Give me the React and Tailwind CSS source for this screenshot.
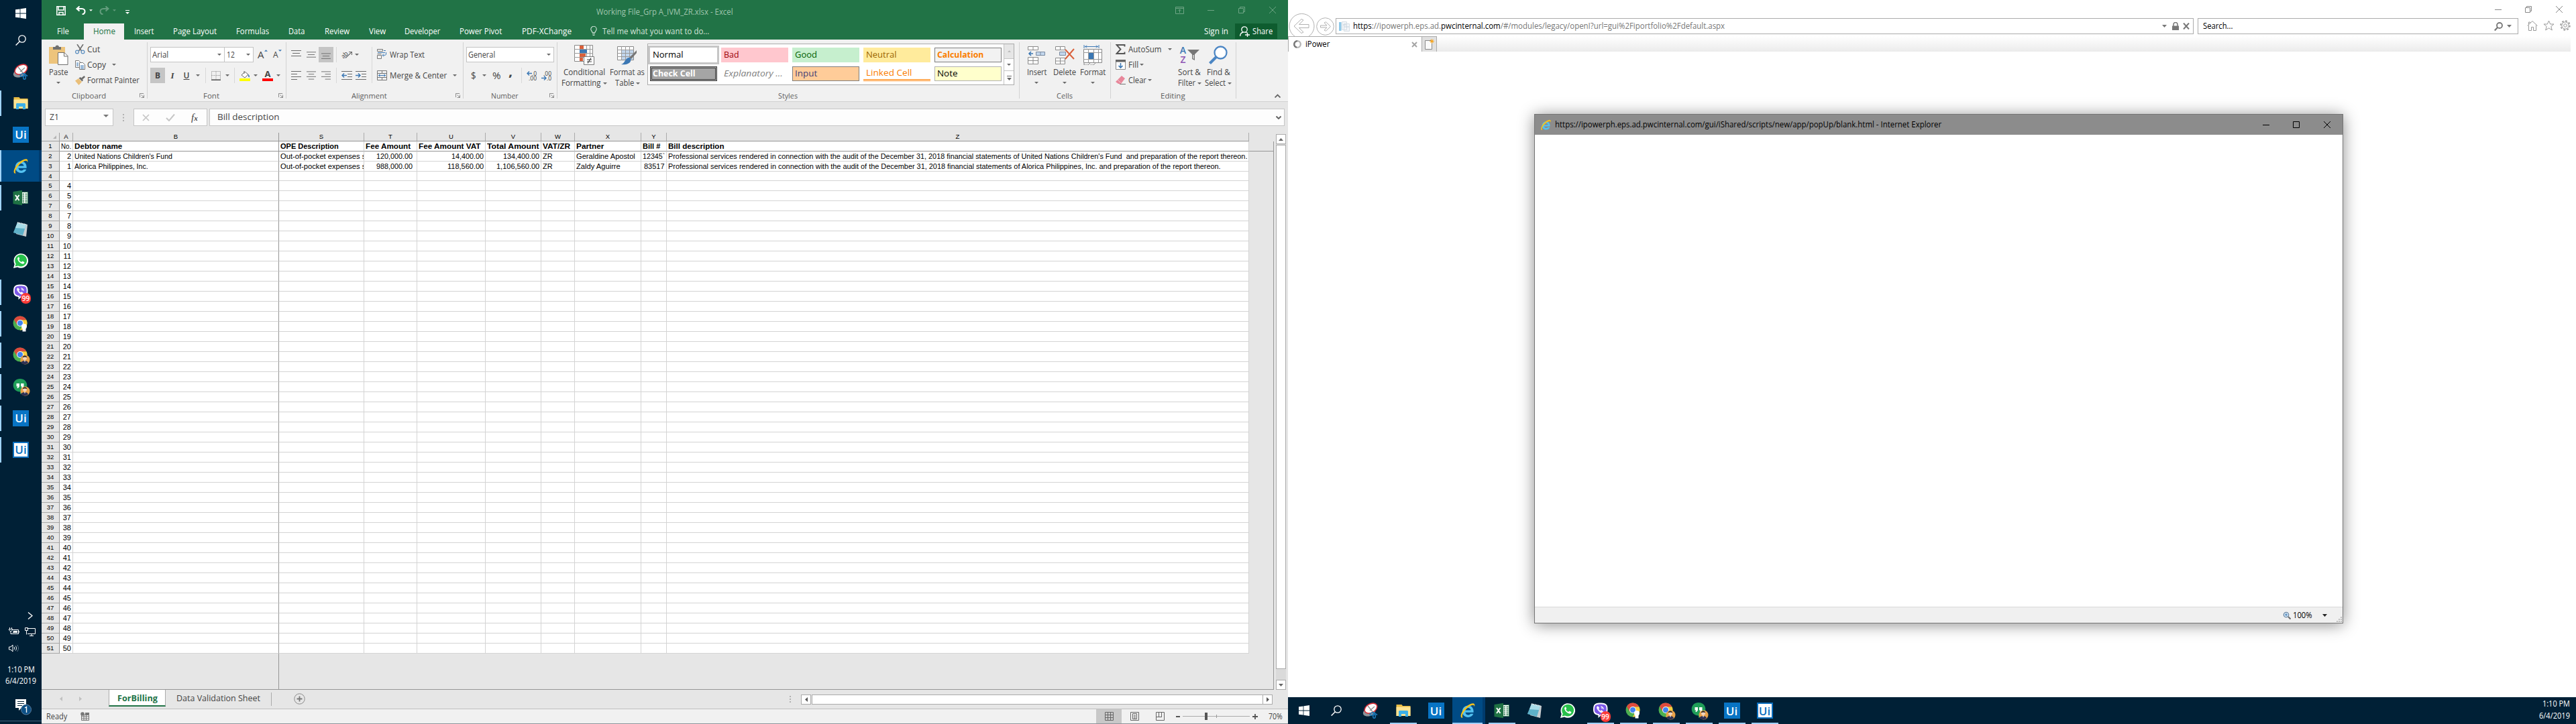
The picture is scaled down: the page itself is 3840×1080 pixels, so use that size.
import { useLayoutEffect, useRef } from "react";

/* Single-line label squeezed or stretched to the width of its box. */
function Fit({ className = "", children }) {
  const box = useRef(null);
  const inner = useRef(null);
  useLayoutEffect(() => {
    const run = () => {
      const natural = inner.current.offsetWidth;
      if (natural) inner.current.style.transform = `scaleX(${box.current.clientWidth / natural})`;
    };
    run();
    document.fonts?.ready.then(run);
  }, []);
  return (
    <span ref={box} className={`block shrink-0 whitespace-pre ${className}`}>
      <span ref={inner} className="inline-block origin-left whitespace-pre">{children}</span>
    </span>
  );
}

const Svg = ({ className, box, children }) => (
  <svg className={`block shrink-0 ${className}`} viewBox={box} fill="none">{children}</svg>
);

const Caret = ({ className = "" }) => (
  <Svg className={`h-[3px] w-[6px] ${className}`} box="0 0 6 3"><path d="M0 0h6L3 3z" fill="#6a6a6a" /></Svg>
);

/* ---------- Taskbar icons ---------- */
const WinIcon = () => (
  <Svg className="size-4" box="0 0 16 16"><path d="M0 2.3 6.6 1.4v6.1H0zM7.4 1.3 16 0v7.5H7.4zM0 8.4h6.6v6.2L0 13.7zM7.4 8.4H16V16l-8.6-1.3z" fill="#fff" /></Svg>
);
const SearchIcon = () => (
  <Svg className="size-4" box="0 0 16 16"><circle cx="10" cy="6" r="5.2" stroke="#fff" strokeWidth="1.3" /><path d="M6.4 9.8.6 15.6" stroke="#fff" strokeWidth="1.4" /></Svg>
);
const SnipIcon = () => (
  <Svg className="size-6" box="0 0 24 24">
    <ellipse cx="10" cy="14" rx="9.5" ry="6" transform="rotate(-20 10 14)" fill="#8d949b" />
    <ellipse cx="12.5" cy="8.6" rx="10" ry="6.6" transform="rotate(-28 12.5 8.6)" fill="#fff" stroke="#d8303a" strokeWidth="1.6" />
    <path d="M8 5l9 11M18 6l-7 6" stroke="#8b8b8b" strokeWidth="1.2" />
    <ellipse cx="14" cy="17" rx="3" ry="1.8" transform="rotate(-25 14 17)" stroke="#1d79b8" strokeWidth="1.6" />
    <ellipse cx="17.5" cy="20.5" rx="1.8" ry="2.8" stroke="#1d79b8" strokeWidth="1.6" /><path d="M16 14.5l6 4" stroke="#1d79b8" strokeWidth="1.8" />
  </Svg>
);
const FolderIcon = () => (
  <Svg className="size-6" box="0 0 24 24">
    <path d="M1.5 3h8l1.5 2h11.5v15h-21z" fill="#e9bd45" /><path d="M1.5 6.5h21V20h-21z" fill="#fde393" />
    <path d="M5 21v-7.5c0-1 .7-1.5 1.5-1.5h11c.8 0 1.5.5 1.5 1.5V21h-4v-4H9v4z" fill="#3db0e8" />
  </Svg>
);
const UiIcon = ({ inverse }) => (
  <span className={inverse
    ? "flex size-6 items-center justify-center border-2 border-[#0a6fbf] bg-white text-[#0a6fbf]"
    : "flex size-6 items-center justify-center bg-[#0874c4] text-white"}>
    <span className="font-['Open_Sans',sans-serif] text-[17px] leading-none font-semibold">Ui</span>
  </span>
);
const IeIcon = ({ className = "size-6" }) => (
  <Svg className={className} box="0 0 24 24">
    <path d="M20.6 14.8H8.4c.3 2.4 2 3.7 4.2 3.7 1.600 0 2.800-.6 3.600-1.800h4.100c-1.200 3.300-4.200 5.200-7.800 5.200-5 0-8.700-3.500-8.700-8.600 0-5 3.700-8.700 8.600-8.700 5.400 0 8.600 4 8.200 10.200zM16.500 11.600c-.3-2.100-1.800-3.500-4-3.500-2.100 0-3.700 1.400-4.100 3.500z" fill="#53c1f0" />
    <path d="M4.500 22.500C1 23.500.5 19 4 13 8 6 16 .5 20.500 1.300c2 .4 2.200 2.700 1.300 5.300.1-2-.6-3-2.300-2.800C14 4.300 5.500 13 4 18.500c-.5 2 0 3.300.5 4z" fill="#f6c21c" />
  </Svg>
);
const ExcelIcon = () => (
  <Svg className="size-6" box="0 0 24 24">
    <path d="M12 3.500h10.500v17H12z" fill="#fff" stroke="#1f7244" strokeWidth=".8" />
    <path d="M14.500 6.500h2.500M18.500 6.500h3M14.500 9.500h2.500M18.500 9.500h3M14.500 12.500h2.500M18.500 12.500h3M14.500 15.500h2.500M18.500 15.500h3M14.500 18.300h2.500M18.500 18.300h3" stroke="#1f7244" strokeWidth="1.500" />
    <path d="M.5 3 14 .8v22.400L.5 21z" fill="#1f7244" /><path d="M4 8l5.500 8M9.500 8 4 16" stroke="#fff" strokeWidth="2" />
  </Svg>
);
const NoteIcon = () => (
  <Svg className="size-6" box="0 0 24 24">
    <path d="M8 2 22 5l-2 18L5 19z" fill="#c9cdd0" /><path d="M7 2 20 5l-5 16L.8 17z" fill="#5fb1c9" />
    <path d="M7 2l13 3-2 6L3.800 10z" fill="#a7dbe8" /><path d="M7 2l13 3" stroke="#e8e8e8" strokeWidth="1.800" strokeDasharray="1.500 1" />
  </Svg>
);
const WhatsIcon = () => (
  <Svg className="size-6" box="0 0 24 24">
    <path d="M1 23l1.700-6A10.800 10.800 0 1 1 7 21.400z" fill="#fff" /><path d="M3.500 20.500l1.200-4A8.900 8.900 0 1 1 8 19.500z" fill="#27c04a" />
    <path d="M8.500 6.500c-1.200.7-1.700 2-1.200 3.500 1 3 3.600 5.700 6.800 6.600 1.500.4 2.800-.2 3.200-1.600.2-.7 0-.9-.5-1.200l-2-1c-.4-.2-.7-.1-1 .3l-.8.9c-1.800-.8-3-2-3.800-3.700l.7-.9c.3-.4.300-.6.100-1L9.300 6.700c-.2-.4-.5-.4-.8-.2z" fill="#fff" />
  </Svg>
);
const ViberIcon = () => (
  <span className="relative block size-6">
    <Svg className="size-6" box="0 0 24 24">
      <path d="M5 1.500C8 .3 15 .3 18.500 1.500c3 1.100 4.200 4 4 8.500 0 6-2 8.500-7 9l-3 .200L8.500 23v-4C3 18 1 15.500 1 10c0-4.500 1-7.400 4-8.500z" fill="#fff" />
      <path d="M6 3.200c3-1 8.500-1 11.700 0 2.300.8 3.200 3 3 6.800 0 4.800-1.500 6.900-5.700 7.300l-3 .2-2 2v-2.300c-5.500-.7-7.200-2.500-7.200-7.200 0-3.800.9-6 3.200-6.800z" fill="#7b58e8" />
      <path d="M7.500 5.500c-1.500 1-1.300 2.500-.5 4 1.200 2.500 3.300 4.600 6 5.600 1.500.5 2.500-.8 2.800-1.600-.8-1-2-1.800-2.700-2l-1.200 1c-1.500-.6-2.500-1.700-3-3l1-1.200c-.4-1.200-1.400-2.700-2.400-2.800zM12 5.500c3 .2 4.500 2 4.600 4.800M12.400 7.600c1.300.2 2 1 2 2.200" fill="#fff" stroke="#fff" strokeWidth=".5" />
    </Svg>
    <span className="absolute -right-[3px] bottom-[-5px] flex h-4 w-[15px] items-center justify-center rounded-[7px] bg-[#fb3b37] font-['Open_Sans',sans-serif] text-[10px] leading-none font-semibold text-white">99</span>
  </span>
);
const Avatar = () => (
  <g><circle cx="18.500" cy="18.500" r="7" fill="#e9a24a" /><circle cx="18" cy="16" r="3" fill="#f1d3bd" /><path d="M14.800 15.500c0-4 6.400-4 6.400 0-1.500-1.500-4.500-1.500-6.400 0z" fill="#2a2523" /><path d="M12.500 22.500c1.500-3.500 9.500-3.500 10.500.700-3 3-8 3-10.500-.7z" fill="#2d2f52" /><path d="M17 19.500h2l-1 3z" fill="#fff" /></g>
);
const ChromeIcon = ({ avatar }) => (
  <Svg className="size-7" box="-2 -2 28 28">
    <circle cx="11" cy="11" r="10.500" fill="#4caf50" />
    <path d="M1.900 5.700A10.500 10.500 0 0 1 20.500 6.500H11z" fill="#df4a3d" /><path d="M1.900 5.700 6.500 13.500 11 6.500z" fill="#df4a3d" />
    <path d="M20.500 6.500H11l4.500 7.500-4.800 7.500A10.500 10.500 0 0 0 20.500 6.500z" fill="#f9cf3e" />
    <circle cx="11" cy="11" r="5" fill="#fff" /><circle cx="11" cy="11" r="4" fill="#4284f0" />
    {avatar ? <Avatar /> : <path d="M13 15c0-4 8-4 8 0 0 2-.5 3.500-1.500 4.500v4h-5v-4C13.500 18.500 13 17 13 15z" fill="#fff" />}
  </Svg>
);
const HangIcon = () => (
  <Svg className="size-7" box="-2 -2 28 28">
    <path d="M11 0C5 0 .7 4.200.7 9.800c0 5.400 4.300 9.700 10.300 9.700V23c6-3 10.300-8 10.300-13.200C21.300 4.200 17 0 11 0z" fill="#1f9d58" />
    <path d="M5.500 7h4.500v4.500L8 14H6.300l1-2.500H5.500zM12 7h4.500v4.500l-2 2.500h-1.700l1-2.500H12z" fill="#fff" /><Avatar />
  </Svg>
);

const APPS = [
  { icon: SnipIcon }, { icon: FolderIcon, open: true }, { icon: UiIcon }, { icon: IeIcon, active: true },
  { icon: ExcelIcon, open: true }, { icon: NoteIcon }, { icon: WhatsIcon }, { icon: ViberIcon, open: true },
  { icon: ChromeIcon, open: true }, { icon: ChromeIcon, open: true, props: { avatar: true } }, { icon: HangIcon, open: true },
  { icon: UiIcon, open: true }, { icon: UiIcon, open: true, props: { inverse: true } },
];

function SideTaskbar() {
  return (
    <aside className="flex h-[1080px] w-[62px] shrink-0 flex-col bg-[#002036] text-white">
      <div className="flex h-10 items-center justify-center"><WinIcon /></div>
      <div className="flex h-[43px] items-center justify-center pb-[3px]"><SearchIcon /></div>
      {APPS.map(({ icon: Icon, open, active, props }, i) => (
        <div key={i} className={`flex h-[47px] items-center ${active ? "border-r-4 border-[#003c6e] bg-[#004b85]" : ""}`}>
          <div className={`w-[2px] ${active ? "h-full bg-[#9fd3fb]" : open ? "h-[38px] bg-[#9fd3fb]" : "h-0"}`} />
          <div className={`flex flex-1 justify-center ${active ? "pl-[2px]" : "pr-[2px]"}`}><Icon {...props} /></div>
        </div>
      ))}
      <div className="mt-auto flex h-[171px] flex-col">
        <Svg className="mt-1 ml-[41px] h-[11px] w-[8px]" box="0 0 8 11"><path d="M1 .5l6 5-6 5" stroke="#fff" strokeWidth="1.300" /></Svg>
        <div className="mt-[12px] flex">
          <Svg className="ml-[13px] h-[12px] w-[16px]" box="0 0 16 12"><path d="M6 3.500h8.500v6H5M15.500 5.500v2" stroke="#fff" /><path d="M7 5h6v3H6z" fill="#fff" /><path d="M1.500 0v2M4.500 0v2M.5 2.500h5v1.500L3 6 .5 4zM3 6v3.500h2" stroke="#fff" /></Svg>
          <Svg className="ml-2 h-[13px] w-[16px]" box="0 0 16 13"><path d="M3.500 1.500h12v8H4M7 12.500h6M10 10v2M.5.500h4v4h-4zM2.500 4.500v6" stroke="#fff" /></Svg>
        </div>
        <Svg className="mt-[12px] ml-[13px] h-[12px] w-[16px]" box="0 0 16 12"><path d="M.5 4h2.500L6 1v10L3 8H.5zM8 4c1 1 1 3 0 4M10 2.500c2 2 2 5 0 7" stroke="#fff" /><path d="M12.500 1c2.600 3 2.600 7 0 10" stroke="#60788a" /></Svg>
        <div className="mt-[17px] flex flex-col items-center text-[12px] leading-[17px]">
          <Fit className="w-[41px]">1:10 PM</Fit>
          <Fit className="w-[46px]">6/4/2019</Fit>
        </div>
        <div className="mt-[19px] ml-[23px] flex">
          <Svg className="h-[24px] w-[24px]" box="0 0 24 24"><path d="M0 0h16v13H9l-4 4v-4H0z" fill="#fff" /><path d="M3 3.500h10M3 6.500h10M3 9.500h7" stroke="#002036" /><circle cx="16" cy="15.500" r="7.500" fill="#0c4f85" stroke="#5b7f9e" /><path d="M14 13l2.500-1.500V20" stroke="#fff" strokeWidth="1.400" /></Svg>
        </div>
        <div className="mt-auto mb-1 h-px bg-[#43657c]" />
      </div>
    </aside>
  );
}

function BottomTaskbar() {
  return (
    <footer className="mt-auto flex h-10 shrink-0 bg-[#002036] text-white">
      <div className="flex w-12 items-center justify-center"><WinIcon /></div>
      <div className="mr-[2px] flex w-12 items-center justify-center"><SearchIcon /></div>
      {APPS.map(({ icon: Icon, open, active, props }, i) => (
        <div key={i} className={`flex h-10 w-[49px] flex-col items-center ${active ? "border-r-4 border-[#003c6e] bg-[#004b85]" : ""}`}>
          <div className="flex h-[38px] items-center pt-[2px]"><Icon {...props} /></div>
          <div className={`h-[2px] bg-[#9fcffb] ${active ? "w-full" : open ? "w-10" : "w-0"}`} />
        </div>
      ))}
      <div className="mr-[9px] ml-auto flex flex-col items-end pt-px text-[12px] leading-[18px]">
        <Fit className="w-[41px]">1:10 PM</Fit>
        <Fit className="w-[46px]">6/4/2019</Fit>
      </div>
    </footer>
  );
}

/* ---------- Excel ---------- */
const TABS = [
  ["File", "w-[63px]", "w-[18px]"], ["Home", "w-[60px] bg-[#f1f1f1] text-[#217346]", "w-[33px]"], ["Insert", "w-[58px]", "w-[29px]"],
  ["Page Layout", "w-[95px]", "w-[65px]"], ["Formulas", "w-[77px]", "w-[49px]"], ["Data", "w-[53px]", "w-[24px]"],
  ["Review", "w-[68px]", "w-[37px]"], ["View", "w-[52px]", "w-[25px]"], ["Developer", "w-[82px]", "w-[53px]"],
  ["Power Pivot", "w-[93px]", "w-[63px]"], ["PDF-XChange", "w-[103px]", "w-[74px]"],
];

function ExcelTitle() {
  return (
    <header className="h-[59px] bg-[#217346] text-white">
      <div className="flex h-[35px] items-center">
        <Svg className="mb-1 ml-[22px] size-[14px]" box="0 0 14 14"><path d="M.8.8h12.400v12.400H.8zM3 1v5h8V1M4 13V9.500h6V13" stroke="#fff" strokeWidth="1.500" /></Svg>
        <Svg className="mb-[5px] ml-[15px] h-[13px] w-[15px]" box="0 0 15 13"><path d="M5.500.5 1.500 4l4 3.500M2 4h7c3 0 4.500 2 4.500 4s-1.500 4-4 4.500" stroke="#fff" strokeWidth="2" /></Svg>
        <Svg className="mb-[5px] ml-[5px] h-[3px] w-[5px]" box="0 0 6 3"><path d="M0 0h6L3 3z" fill="#fff" /></Svg>
        <Svg className="mb-[5px] ml-[10px] h-[13px] w-[15px] opacity-30" box="0 0 15 13"><path d="M9.500.5l4 3.500-4 3.500M13 4H6C3 4 1.500 6 1.500 8s1.500 4 4 4.500" stroke="#fff" strokeWidth="2" /></Svg>
        <Svg className="mb-[5px] ml-[5px] h-[3px] w-[5px] opacity-30" box="0 0 6 3"><path d="M0 0h6L3 3z" fill="#fff" /></Svg>
        <Svg className="ml-[14px] h-[6px] w-[6px]" box="0 0 6 6"><path d="M0 .5h6" stroke="#fff" /><path d="M0 3h6L3 6z" fill="#fff" /></Svg>
        <Fit className="ml-[696px] w-[204px] text-[12px] text-[#a0c5ae]">Working File_Grp A_IVM_ZR.xlsx - Excel</Fit>
        <div className="mb-[5px] ml-auto flex items-center pr-[18px] opacity-60">
          <Svg className="h-[11px] w-[13px]" box="0 0 13 11"><path d="M.5.5h12v10H.5zM.5 2.500h12M6.500 9V4M4.500 6l2-2 2 2" stroke="#a0c5ae" /></Svg>
          <Svg className="ml-[35px] h-[11px] w-[10px]" box="0 0 10 11"><path d="M0 5.500h10" stroke="#a0c5ae" /></Svg>
          <Svg className="ml-[36px] size-[10px]" box="0 0 10 10"><path d="M.5 2.500h7v7h-7zM2.500 2.500v-2h7v7h-2" stroke="#a0c5ae" /></Svg>
          <Svg className="ml-[36px] size-[10px]" box="0 0 10 10"><path d="M0 0l10 10M10 0 0 10" stroke="#a0c5ae" /></Svg>
        </div>
      </div>
      <nav className="flex h-6 items-center text-[12px]">
        {TABS.map(([name, box, text]) => (
          <div key={name} className={`flex h-6 items-center justify-center ${box}`}><Fit className={text}>{name}</Fit></div>
        ))}
        <Svg className="mb-[2px] ml-[14px] h-[14px] w-[10px]" box="0 0 10 14"><path d="M3 9.500C3 7.500.8 7 .8 4.500a4.200 4.200 0 0 1 8.400 0C9.200 7 7 7.500 7 9.500zM3 11.500h4M3.500 13.500h3" stroke="#d6e6dc" strokeWidth="1.100" /></Svg>
        <Fit className="ml-[8px] w-[159px] text-[#d3e3d9]">Tell me what you want to do...</Fit>
        <Fit className="ml-auto w-[36px]">Sign in</Fit>
        <div className="mr-4 mb-px ml-[10px] flex h-[23px] w-[63px] items-center bg-[#0e5c2f] pl-[7px]">
          <Svg className="h-[16px] w-[15px]" box="0 0 15 16"><circle cx="7" cy="5" r="4.200" stroke="#fff" strokeWidth="1.300" /><path d="M.7 15c0-3.500 2-5.500 4.500-6M8.800 9l1.700 1.200M8 13h7M11.500 9.500v6.500" stroke="#fff" strokeWidth="1.300" /></Svg>
          <Fit className="ml-[4px] w-[30px]">Share</Fit>
        </div>
      </nav>
    </header>
  );
}

const Launcher = () => (
  <Svg className="mr-[4px] ml-auto h-[7px] w-[7px]" box="0 0 8 8"><path d="M.5 7V.5H7M3 3l4 4M7.500 3v4.500H3" stroke="#777" /></Svg>
);

function Group({ className, label, labelClass, launcher, children }) {
  return (
    <section className={`flex h-[84px] shrink-0 flex-col border-r border-[#d2d2d2] ${className}`}>
      <div className="flex h-[75px]">{children}</div>
      <div className="flex h-[9px] items-center">
        <Fit className={`text-[11.500px] text-[#5e5e5e] ${labelClass}`}>{label}</Fit>
        {launcher && <Launcher />}
      </div>
    </section>
  );
}

const Lines = ({ d, className = "w-[15px]" }) => (
  <Svg className={`h-[13px] ${className}`} box="0 0 15 13"><path d={d} stroke="#6a6a6a" /></Svg>
);
const Sep = ({ className }) => <div className={`h-[23px] w-px shrink-0 bg-[#d8d8d8] ${className}`} />;

const PasteIcon = () => (
  <Svg className="h-[30px] w-[29px]" box="0 0 29 30"><path d="M0 3h24v25H0z" fill="#edc47c" /><path d="M6 3h3.500C9.500-.5 15-.5 15 3h3v4H6z" fill="#707070" /><path d="M13.500 11.500H23l5 5v13H13.500z" fill="#fff" stroke="#6e6e6e" /><path d="M22.500 11.500V17H28" stroke="#6e6e6e" /></Svg>
);
const CutIcon = () => (
  <Svg className="h-[15px] w-[15px]" box="0 0 15 15"><path d="M3 0l6.500 10M12 0 5.500 10" stroke="#6e6e6e" strokeWidth="1.600" /><circle cx="3" cy="11.500" r="2.400" stroke="#5c8fc0" strokeWidth="1.200" /><circle cx="11.500" cy="11.500" r="2.400" stroke="#5c8fc0" strokeWidth="1.200" /></Svg>
);
const CopyIcon = () => (
  <Svg className="h-[14px] w-[15px]" box="0 0 15 14"><path d="M.5.500h5l2 2v8h-7z" fill="#fff" stroke="#777" /><path d="M6.500 3.500h5l3 3v7h-8z" fill="#fff" stroke="#777" /><path d="M2 4h3M2 6h3M2 8h3M8 8h5M8 10h5M8 12h5" stroke="#3c78b4" /></Svg>
);
const PainterIcon = () => (
  <Svg className="h-[14px] w-[15px]" box="0 0 15 14"><path d="M13.500 0l1.500 2-4 3.500-2-2z" fill="#6a6a6a" /><path d="M5.500 3.500 8 2l4 4.500-1.500 2z" fill="#6a6a6a" /><path d="M5 4l5 5-4.500 5L0 7.500z" fill="#eabf79" /></Svg>
);

function Small({ icon, text, width, caret }) {
  return (
    <div className="flex h-[23px] items-center">
      <div className="w-[15px]">{icon}</div>
      <Fit className={width}>{text}</Fit>
      {caret && <Caret className={caret} />}
    </div>
  );
}

function Big({ className, icon, a, aw, b, bw }) {
  return (
    <div className={`flex shrink-0 flex-col items-center pt-[4px] leading-4 ${className}`}>
      <div className="flex h-[30px] items-center">{icon}</div>
      <Fit className={`mt-[3px] h-4 ${aw}`}>{a}</Fit>
      <div className="flex h-4 items-center gap-[3px]">{b && <Fit className={bw}>{b}</Fit>}<Caret className={b ? "" : "mb-[2px]"} /></div>
    </div>
  );
}

const SWATCHES = [
  ["Normal", "bg-white text-black ring-[3px] ring-[#c6c6c6]", "w-[45px]"], ["Bad", "bg-[#ffc7ce] text-[#9c0006]", "w-[23px]"],
  ["Good", "bg-[#c6efce] text-[#006100]", "w-[33px]"], ["Neutral", "bg-[#ffeb9c] text-[#9c6500]", "w-[46px]"],
  ["Calculation", "border border-[#7f7f7f] bg-[#f2f2f2] font-bold text-[#fa7d00]", "w-[69px]"],
  ["Check Cell", "border-3 border-double border-[#3f3f3f] bg-[#a5a5a5] font-bold text-white", "w-[64px]"],
  ["Explanatory ...", "text-[#7f7f7f] italic", "w-[88px]"], ["Input", "border border-[#7f7f7f] bg-[#ffcc99] text-[#3f3f76]", "w-[33px]"],
  ["Linked Cell", "border-b-3 border-double border-[#ff8001] text-[#fa7d00]", "w-[69px]"],
  ["Note", "border border-[#b2b2b2] bg-[#ffffcc] text-black", "w-[31px]"],
];

const FmtLetter = ({ children, className, bar }) => (
  <span className={`flex flex-col items-center leading-none ${className}`}>{children}<span className={`h-1 w-4 ${bar}`} /></span>
);

function Ribbon() {
  return (
    <div className="flex h-[93px] border-b border-[#d2d2d2] bg-[#f1f1f1] pt-1 text-[12px] text-[#444]">
      <Group className="w-[158px]" label="Clipboard" labelClass="ml-[45px] w-[51px]" launcher>
        <Big className="ml-[9px] w-[32px]" icon={<PasteIcon />} a="Paste" aw="w-[29px]" />
        <div className="-mt-[1px] ml-[9px] flex flex-col">
          <Small icon={<CutIcon />} text="Cut" width="ml-[3px] w-[19px]" />
          <Small icon={<CopyIcon />} text="Copy" width="ml-[3px] w-[28px]" caret="ml-[9px]" />
          <Small icon={<PainterIcon />} text="Format Painter" width="ml-[3px] w-[78px]" />
        </div>
      </Group>
      <Group className="w-[207px]" label="Font" labelClass="ml-[83px] w-[24px]" launcher>
        <div className="flex flex-col pt-[7px]">
          <div className="flex h-[23px] items-center pl-[4px]">
            <div className="flex h-[23px] w-[111px] items-center border border-[#c4c4c4] bg-white pr-[4px] pl-[2px]"><Fit className="w-[24px]">Arial</Fit><Caret className="ml-auto" /></div>
            <div className="-ml-px flex h-[23px] w-[44px] items-center border border-[#c4c4c4] bg-white pr-[4px] pl-[3px]"><Fit className="w-[12px]">12</Fit><Caret className="ml-auto" /></div>
            <Fit className="ml-[6px] w-[10px] text-[15px]">A</Fit><Svg className="mb-3 h-[3px] w-[5px]" box="0 0 6 3"><path d="M0 3h6L3 0z" fill="#3c78b4" /></Svg>
            <Fit className="ml-[8px] w-[8px] pt-px text-[12px]">A</Fit><Svg className="mb-3 h-[3px] w-[5px]" box="0 0 6 3"><path d="M0 0h6L3 3z" fill="#3c78b4" /></Svg>
          </div>
          <div className="mt-[8px] flex h-[23px] items-center pl-[4px]">
            <div className="flex h-[23px] w-[22px] items-center justify-center bg-[#c5c5c5] font-bold">B</div>
            <div className="w-[22px] text-center font-['Liberation_Serif',serif] text-[13px] font-bold italic">I</div>
            <div className="w-[20px] text-center font-semibold underline">U</div>
            <Caret className="ml-[4px]" /><Sep className="ml-[8px]" />
            <Svg className="ml-[8px] size-[14px]" box="0 0 14 14"><path d="M.5.500h13v12H.5zM7 0v13M0 6.500h14" stroke="#8a8a8a" strokeDasharray="1 1" /><path d="M0 13.300h14" stroke="#555" strokeWidth="1.400" /></Svg>
            <Caret className="ml-[7px]" /><Sep className="ml-[7px]" />
            <Svg className="ml-[7px] h-[16px] w-[16px]" box="0 0 16 16"><path d="M7 1v4M3 7l5-5 5 4-5 5z" fill="#fff" stroke="#666" /><path d="M13 6c2 1 2.500 3 1.500 4.500C13 9.500 12.500 8 13 6z" fill="#3c78b4" /><path d="M0 12h16v4H0z" fill="#ff0" /></Svg>
            <Caret className="ml-[5px]" />
            <FmtLetter className="ml-[7px] text-[13px] font-bold" bar="bg-[#f00]">A</FmtLetter>
            <Caret className="ml-[5px]" />
          </div>
        </div>
      </Group>
      <Group className="w-[264px]" label="Alignment" labelClass="ml-[97px] w-[53px]" launcher>
        <div className="w-[127px] pt-[7px]">
          <div className="flex h-[23px] items-center">
            <Lines className="mb-[9px] ml-[7px] w-[15px]" d="M0 4.500h15M2 8.500h11M0 12.500h15" />
            <Lines className="ml-[8px] w-[14px]" d="M0 2.500h15M2 6.500h11M0 10.500h15" />
            <div className="ml-[4px] flex h-[23px] w-[22px] items-center justify-center bg-[#c5c5c5] pt-[7px]"><Lines className="w-[14px]" d="M0 .5h15M2 4.500h11M0 8.500h15" /></div>
            <Sep className="ml-[4px]" />
            <span className="ml-[6px] flex items-center">
              <span className="w-[11px] -rotate-45 text-[9px] leading-none">ab</span>
              <Svg className="-ml-[5px] h-[11px] w-[11px]" box="0 0 11 11"><path d="M1 10.500l9-8.500M6 1.500h4.500V6" stroke="#6a6a6a" strokeWidth="1.200" /></Svg>
            </span>
            <Caret className="ml-[4px]" />
          </div>
          <div className="mt-[8px] flex h-[23px] items-center">
            <Lines className="ml-[7px] w-[15px]" d="M0 .5h15M0 4.500h9M0 8.500h15M0 12.500h9" />
            <Lines className="ml-[8px] w-[14px]" d="M0 .5h15M3 4.500h9M0 8.500h15M3 12.500h9" />
            <Lines className="ml-[8px] w-[14px]" d="M0 .5h15M6 4.500h9M0 8.500h15M6 12.500h9" />
            <Sep className="ml-[8px]" />
            <Svg className="ml-[7px] h-[13px] w-[16px]" box="0 0 16 13"><path d="M0 .5h16M9 4.500h7M9 8.500h7M0 12.500h16" stroke="#6a6a6a" /><path d="M1 6.500h7M4 3.500l-3 3 3 3" stroke="#3c78b4" strokeWidth="1.500" /></Svg>
            <Svg className="ml-[5px] h-[13px] w-[16px]" box="0 0 16 13"><path d="M0 .5h16M9 4.500h7M9 8.500h7M0 12.500h16" stroke="#6a6a6a" /><path d="M0 6.500h7M4 3.500l3 3-3 3" stroke="#3c78b4" strokeWidth="1.500" /></Svg>
          </div>
        </div>
        <div className="mt-[7px] h-[54px] w-px bg-[#d8d8d8]" />
        <div className="flex flex-col pt-[7px]">
          <div className="flex h-[23px] items-center">
            <Svg className="mb-[2px] ml-[7px] h-[15px] w-[15px]" box="0 0 15 15"><path d="M.5.500h8v3h-8zM.5 7.500h6M.5 9.500h6v5h-6z" stroke="#777" /><path d="M10 2.500h3M1 5.500h11M13.500 5v3c0 1-1 1.500-5 1.500M10 7.500l-2 2 2 2" stroke="#3c78b4" /></Svg>
            <Fit className="ml-[4px] w-[52px]">Wrap Text</Fit>
          </div>
          <div className="mt-[8px] flex h-[23px] items-center">
            <Svg className="ml-[7px] h-[15px] w-[15px]" box="0 0 15 15"><path d="M.5.500h14v14H.5zM.5 4.500h14M.5 10.500h14M7.500 0v4M7.500 11v4" stroke="#777" /><path d="M2 7.500h11M4.500 5.500l-2 2 2 2M10.500 5.500l2 2-2 2" stroke="#3c78b4" /></Svg>
            <Fit className="ml-[4px] w-[85px]">Merge &amp; Center</Fit>
            <Caret className="ml-[9px]" />
          </div>
        </div>
      </Group>
      <Group className="w-[140px]" label="Number" labelClass="ml-[41px] w-[41px]" launcher>
        <div className="flex flex-col pt-[7px]">
          <div className="ml-[4px] flex h-[23px] w-[131px] items-center border border-[#c4c4c4] bg-white pr-[4px] pl-[2px]"><Fit className="w-[40px]">General</Fit><Caret className="ml-auto" /></div>
          <div className="mt-[8px] flex h-[23px] items-center">
            <Fit className="ml-[11px] w-[8px] text-[15px]">$</Fit><Caret className="ml-[9px]" />
            <Fit className="ml-[9px] w-[13px] text-[14px]">%</Fit>
            <Fit className="mb-[10px] ml-[11px] w-[6px] text-[18px] font-bold">,</Fit>
            <Sep className="ml-[13px]" />
            <div className="ml-[7px] w-[15px] text-right text-[8.500px] leading-[7px]"><div className="flex items-center justify-end"><Svg className="h-[7px] w-[8px]" box="0 0 8 7"><path d="M1 3.500h7M4 .5l-3 3 3 3" stroke="#3c78b4" strokeWidth="1.400" /></Svg>.0</div><div>.00</div></div>
            <div className="ml-[7px] w-[15px] text-right text-[8.500px] leading-[7px]"><div>.00</div><div className="flex items-center justify-end"><Svg className="h-[7px] w-[8px]" box="0 0 8 7"><path d="M0 3.500h7M4 .5l3 3-3 3" stroke="#3c78b4" strokeWidth="1.400" /></Svg>.0</div></div>
          </div>
        </div>
      </Group>
      <Group className="w-[689px]" label="Styles" labelClass="ml-[329px] w-[29px]">
        <Big className="ml-[6px] w-[68px]" a="Conditional" aw="w-[62px]" b="Formatting" bw="w-[59px]" icon={
          <Svg className="h-[30px] w-[30px]" box="0 0 30 30"><path d="M.5.500h27v24H.5z" fill="#fff" stroke="#888" /><path d="M8.500 0v25M18.500 0v25M23.500 0v25M0 6.500h28M0 12.500h28M0 18.500h28" stroke="#999" /><path d="M8 1h6v5H8zM8 13h9v5H8zM8 19h5v5H8z" fill="#d9603b" /><path d="M8 7h11v5H8z" fill="#3c78b4" /><path d="M14.500 17.500h15v12h-15z" fill="#fff" stroke="#777" /><path d="M19 22h7M19 25h7M25 19.500 20 27.500" stroke="#444" strokeWidth="1.200" /></Svg>} />
        <Big className="ml-[3px] w-[54px]" a="Format as" aw="w-[52px]" b="Table" bw="w-[28px]" icon={
          <Svg className="h-[30px] w-[30px]" box="0 0 30 30"><path d="M.5 2.500h24v20H.5z" fill="#fff" stroke="#888" /><path d="M7 8h17v14H7z" fill="#c2d6ec" /><path d="M6.500 2v21M12.500 2v21M18.500 2v21M0 7.500h25M0 12.500h25M0 17.500h25" stroke="#999" /><path d="M29 8v4l-8 9-3-2z" fill="#777" /><path d="M17 19c3 0 4 2 3 5-1 4-7 6-14 5 5-1 6-9 11-10z" fill="#3c78b4" /></Svg>} />
        <div className="mt-[2px] ml-[3px] flex h-[62px] w-[547px] border border-[#ababab] bg-white">
          <div className="grid grid-cols-[repeat(5,100px)] grid-rows-[22px_22px] gap-[6px] pt-[5px] pl-[3px] text-[13px]">
            {SWATCHES.map(([name, box, text]) => (
              <div key={name} className={`flex items-center ${box}`}>
                <Fit className={`${text} ${box.includes("border-3") ? "ml-[1px]" : box.startsWith("border ") ? "ml-[3px]" : "ml-[4px]"}`}>{name}</Fit>
              </div>
            ))}
          </div>
          <div className="ml-auto flex w-[15px] flex-col border-l border-[#c4c4c4]">
            <div className="flex h-[21px] items-center justify-center bg-[#e6e6e6]"><Svg className="h-[3px] w-[5px]" box="0 0 6 3"><path d="M0 3h6L3 0z" fill="#b4b4b4" /></Svg></div>
            <div className="flex h-[19px] items-center justify-center border-y border-[#c4c4c4]"><Caret /></div>
            <div className="flex h-[20px] items-center justify-center"><Svg className="h-[7px] w-[7px]" box="0 0 7 7"><path d="M0 .5h7" stroke="#666" /><path d="M0 3h7L3.500 7z" fill="#666" /></Svg></div>
          </div>
        </div>
      </Group>
      <Group className="w-[136px]" label="Cells" labelClass="ml-[55px] w-[24px]">
        <Big className="ml-[5px] w-[40px]" a="Insert" aw="w-[29px]" icon={
          <Svg className="h-[28px] w-[27px]" box="0 0 27 28"><path d="M.5 1.500h15v5H.5zM8 1v6M.5 17.500h15v10H.5zM.5 22.500h15M8 17v11" fill="#fff" stroke="#8a8a8a" /><path d="M12.500 9.500h13v5h-13zM19 9v6" fill="#c2d6ec" stroke="#7a8aa0" /><path d="M8 12H2M5 9l-3 3 3 3" stroke="#3c78b4" strokeWidth="1.600" /></Svg>} />
        <Big className="ml-[2px] w-[40px]" a="Delete" aw="w-[34px]" icon={
          <Svg className="h-[28px] w-[29px]" box="0 0 29 28"><path d="M.5 1.500h14v5H.5zM7.500 1v6M.5 18.500h14v9H.5zM.5 23h14M7.500 18v10" fill="#fff" stroke="#8a8a8a" /><path d="M6.500 9.500h9v5h-9z" fill="#c2d6ec" stroke="#7a8aa0" /><path d="M15 6l13 14M28 5 15 20" stroke="#d9603b" strokeWidth="2" /></Svg>} />
        <Big className="ml-[2px] w-[40px]" a="Format" aw="w-[38px]" icon={
          <Svg className="h-[30px] w-[29px]" box="0 0 29 30"><path d="M1 0v5M23 0v5M2 2.500h20M5 .5l-2 2 2 2M19 .5l2 2-2 2" stroke="#3c78b4" /><path d="M.5 6.500h27v20H.5z" fill="#fff" stroke="#888" /><path d="M7.500 6v20M15.500 6v20M22.500 6v20M0 11.500h28M0 21.500h28" stroke="#999" /><path d="M8 12h7v9H8z" fill="#3c78b4" /><path d="M1 27v3h6l3-3M10 30h5l3-3" stroke="#888" /></Svg>} />
      </Group>
      <Group className="w-[187px]" label="Editing" labelClass="ml-[74px] w-[37px]">
        <div className="-mt-[1px] ml-[7px] flex w-[90px] flex-col">
          <Small icon={<Svg className="h-[15px] w-[15px]" box="0 0 15 15"><path d="M13.500 3.500V1H1.500l6 6.500-6 6.500h12v-2.500" stroke="#555" strokeWidth="1.900" /></Svg>} text="AutoSum" width="ml-[4px] w-[50px]" caret="ml-[9px]" />
          <Small icon={<Svg className="h-[15px] w-[15px]" box="0 0 15 15"><path d="M.5.500h14v14H.5z" fill="#fff" stroke="#888" /><path d="M0 0h15v3.500H0z" fill="#666" /><path d="M7.500 5v7M4.500 9l3 3 3-3" stroke="#3c78b4" strokeWidth="1.600" /></Svg>} text="Fill" width="ml-[4px] w-[15px]" caret="ml-[2px]" />
          <Small icon={<Svg className="h-[14px] w-[15px]" box="0 0 15 14"><path d="M9 0l5 4-6 8H4L0 9z" fill="#e8879a" /><path d="M3 6l4.500 4.500" stroke="#f6c6cf" /><path d="M6 12.500h9" stroke="#777" /></Svg>} text="Clear" width="ml-[4px] w-[27px]" caret="ml-[2px]" />
        </div>
        <Big className="w-[40px]" a="Sort &" aw="w-[34px]" b="Filter" bw="w-[26px]" icon={
          <span className="flex w-[30px] items-center">
            <span className="flex w-[11px] flex-col items-center text-[14px] leading-[14px] font-semibold"><span className="text-[#3c78b4]">A</span><span className="text-[#8e56b4]">Z</span></span>
            <Svg className="ml-px h-[18px] w-[18px]" box="0 0 18 18"><path d="M0 1h18l-7 7v9l-4-2V8z" fill="#777" /><path d="M9 9v5.500" stroke="#fff" strokeWidth="1.200" /></Svg>
          </span>} />
        <Big className="ml-[3px] w-[40px]" a="Find &" aw="w-[35px]" b="Select" bw="w-[31px]" icon={
          <Svg className="h-[28px] w-[28px]" box="0 0 28 28"><circle cx="17.500" cy="10.500" r="9" fill="#fff" stroke="#4c86c4" strokeWidth="2.300" /><path d="M11 17 1.500 26.500" stroke="#4c86c4" strokeWidth="4" /></Svg>} />
      </Group>
      <Svg className="mt-[77px] ml-[57px] h-[6px] w-[9px]" box="0 0 9 6"><path d="M.5 5.500l4-4 4 4" stroke="#666" strokeWidth="1.800" /></Svg>
    </div>
  );
}

function FormulaBar() {
  return (
    <div className="flex h-[46px] items-start pt-[10px] text-[13px] text-[#444]">
      <div className="ml-[5px] flex h-[26px] w-[102px] items-center border border-[#c6c6c6] bg-[#fdfdfd] pr-[6px] pl-[6px]"><Fit className="w-[14px]">Z1</Fit><Svg className="mb-1 ml-auto h-[4px] w-[8px]" box="0 0 8 4"><path d="M0 0h8L4 4z" fill="#777" /></Svg></div>
      <Svg className="mt-[8px] ml-[14px] h-[11px] w-[2px]" box="0 0 2 11"><path d="M0 0h2v2H0zM0 4.500h2v2H0zM0 9h2v2H0z" fill="#b0b0b0" /></Svg>
      <div className="ml-[14px] flex h-[26px] w-[110px] items-center border border-[#c6c6c6] bg-[#fdfdfd] pl-[12px]">
        <Svg className="size-[11px]" box="0 0 11 11"><path d="M1 1l9 9M10 1l-9 9" stroke="#c6c6c6" strokeWidth="1.700" /></Svg>
        <Svg className="ml-[24px] h-[11px] w-[14px]" box="0 0 14 11"><path d="M1 6l4 4 8-9.500" stroke="#c6c6c6" strokeWidth="2" /></Svg>
        <span className="ml-[24px] font-['Liberation_Serif',serif] text-[15px] leading-none italic">f<span className="text-[11px] font-bold">x</span></span>
      </div>
      <div className="ml-[3px] flex h-[26px] w-[1603px] items-center border border-[#c6c6c6] bg-[#fdfdfd] pr-[4px] pl-[11px]">
        <Fit className="w-[93px]">Bill description</Fit>
        <Svg className="ml-auto h-[5px] w-[8px]" box="0 0 8 5"><path d="M.5.500l3.500 3.500L7.500.5" stroke="#666" strokeWidth="2" /></Svg>
      </div>
    </div>
  );
}

const GRID = "grid grid-cols-[27px_20px_307px_127px_79px_102px_83px_50px_99px_38px_868px]";
const COLS = ["A", "B", "S", "T", "U", "V", "W", "X", "Y", "Z"];
const DATA = {
  1: [["No.", "w-[15px] font-normal"], ["Debtor name", "w-[71px]"], ["OPE Description", "w-[87px]"], ["Fee Amount", "w-[67px]"], ["Fee Amount VAT", "w-[93px]"], ["Total Amount", "w-[78px]"], ["VAT/ZR", "w-[41px]"], ["Partner", "w-[42px]"], ["Bill #", "w-[26px]"], ["Bill description", "w-[83px]"]],
  2: [["2", "w-[6px] ml-auto"], ["United Nations Children's Fund", "w-[146px]"], ["Out-of-pocket expenses s", "w-[127px]"], ["120,000.00", "w-[54px] ml-auto mr-[4px]"], ["14,400.00", "w-[48px] ml-auto"], ["134,400.00", "w-[54px] ml-auto"], ["ZR", "w-[15px]"], ["Geraldine Apostol", "w-[88px]"], ["12345`", "w-[33px]"], ["Professional services rendered in connection with the audit of the December 31, 2018 financial statements of United Nations Children's Fund  and preparation of the report thereon.", "w-[863px]"]],
  3: [["1", "w-[6px] ml-auto"], ["Alorica Philippines, Inc.", "w-[110px]"], ["Out-of-pocket expenses s", "w-[127px]"], ["988,000.00", "w-[54px] ml-auto mr-[4px]"], ["118,560.00", "w-[54px] ml-auto"], ["1,106,560.00", "w-[64px] ml-auto"], ["ZR", "w-[15px]"], ["Zaldy Aguirre", "w-[66px]"], ["83517", "w-[31px] ml-auto"], ["Professional services rendered in connection with the audit of the December 31, 2018 financial statements of Alorica Philippines, Inc. and preparation of the report thereon.", "w-[824px]"]],
};

function SheetRow({ n }) {
  const cells = DATA[n];
  const line = n === 1 ? "border-b-[#969696]" : "border-b-[#d4d4d4]";
  return (
    <div className={`flex ${n === 4 ? "h-[14px]" : "h-[15px]"}`}>
      <div className={GRID}>
        <div className="flex items-center justify-center border-r border-b border-r-[#969696] border-b-[#a8a8a8] bg-[#e6e6e6] text-[9.500px] leading-none text-black">{n}</div>
        {COLS.map((c, i) => (
          <div key={c} className={`flex items-center overflow-hidden border-r border-b bg-white pr-[2px] pl-[2px] text-[11px] leading-[14px] text-black ${line} ${c === "B" ? "border-r-[#969696]" : "border-r-[#d4d4d4]"} ${n === 1 && i ? "font-bold" : ""}`}>
            {cells ? <Fit className={cells[i][1]}>{cells[i][0]}</Fit> : i === 0 && n > 4 ? <span className="ml-auto">{n - 1}</span> : null}
          </div>
        ))}
      </div>
      <div className={`w-[37px] border-r border-r-[#969696] ${n === 1 ? "border-b border-b-[#969696]" : ""}`} />
    </div>
  );
}

function Sheet() {
  return (
    <div className="flex h-[831px] font-['Liberation_Sans',Arial,sans-serif]">
      <div className="flex w-[1837px] flex-col">
        <div className={`${GRID} h-[13px] w-[1800px] text-center text-[9.500px] leading-[12px] text-black`}>
          <div className="flex items-end justify-end border-r border-b border-[#a0a0a0] pr-[4px] pb-[3px]"><Svg className="size-[5px]" box="0 0 5 5"><path d="M5 0v5H0z" fill="#b4b4b4" /></Svg></div>
          {COLS.map((c) => <div key={c} className={`border-r border-b border-b-[#969696] ${c === "B" ? "border-r-[#969696]" : "border-r-[#ababab]"}`}>{c}</div>)}
        </div>
        {Array.from({ length: 51 }, (_, i) => <SheetRow key={i} n={i + 1} />)}
        <div className="flex flex-1 border-r border-b border-[#969696]"><div className="w-[354px] border-r border-[#969696]" /></div>
      </div>
      <div className="mt-[2px] ml-[3px] flex h-[829px] w-[15px] flex-col bg-[#dadada]">
        <div className="flex h-[15px] items-center justify-center border border-[#ababab] bg-white"><Svg className="h-[4px] w-[7px]" box="0 0 7 4"><path d="M0 4h7L3.500 0z" fill="#666" /></Svg></div>
        <div className="mt-px h-[782px] border border-[#ababab] bg-white" />
        <div className="mt-auto flex h-[15px] items-center justify-center border border-[#ababab] bg-white"><Svg className="h-[4px] w-[7px]" box="0 0 7 4"><path d="M0 0h7L3.500 4z" fill="#666" /></Svg></div>
      </div>
    </div>
  );
}

function SheetTabs() {
  return (
    <div className="flex h-[29px] items-start border-b border-[#c0c0c0] text-[12px] text-[#444]">
      <Svg className="mt-[10px] ml-[27px] h-[7px] w-[4px]" box="0 0 4 7"><path d="M4 0v7L0 3.500z" fill="#c0c0c0" /></Svg>
      <Svg className="mt-[10px] ml-[25px] h-[7px] w-[4px]" box="0 0 4 7"><path d="M0 0v7l4-3.500z" fill="#c0c0c0" /></Svg>
      <div className="ml-[40px] flex h-[25px] w-[85px] items-center justify-center border-x border-b-2 border-x-[#ababab] border-b-[#217346] bg-white pt-[2px] font-bold text-[#217346]"><Fit className="w-[60px]">ForBilling</Fit></div>
      <div className="flex h-[25px] items-center pl-[16px]"><Fit className="w-[125px]">Data Validation Sheet</Fit></div>
      <div className="mt-[4px] ml-[16px] h-[20px] w-px bg-[#ababab]" />
      <Svg className="mt-[5px] ml-[33px] size-[17px]" box="0 0 17 17"><circle cx="8.500" cy="8.500" r="7.700" stroke="#8a8a8a" /><path d="M8.500 4.500v8M4.500 8.500h8" stroke="#777" strokeWidth="1.800" /></Svg>
      <Svg className="mt-[9px] ml-[722px] h-[10px] w-[2px]" box="0 0 2 10"><path d="M0 0h2v2H0zM0 4h2v2H0zM0 8h2v2H0z" fill="#b0b0b0" /></Svg>
      <div className="mt-[7px] mr-[23px] ml-auto flex h-[15px]">
        <div className="flex w-[15px] items-center justify-center border border-[#ababab] bg-white"><Svg className="h-[7px] w-[4px]" box="0 0 4 7"><path d="M4 0v7L0 3.500z" fill="#555" /></Svg></div>
        <div className="ml-px w-[673px] border border-[#ababab] bg-white" />
        <div className="-ml-px flex w-[15px] items-center justify-center border border-[#ababab] bg-white"><Svg className="h-[7px] w-[4px]" box="0 0 4 7"><path d="M0 0v7l4-3.500z" fill="#555" /></Svg></div>
      </div>
    </div>
  );
}

function StatusBar() {
  return (
    <div className="flex h-[22px] items-center border-b border-[#8d959b] bg-[#f1f1f1] text-[12px] text-[#444]">
      <Fit className="ml-[7px] w-[31px]">Ready</Fit>
      <Svg className="ml-[20px] h-[13px] w-[13px]" box="0 0 13 13"><path d="M1.500 4.500h11v8h-11zM2 7h10M2 10h10M5 5v8M8.500 5v8" stroke="#777" /><path d="M7 1h6v3H7z" fill="#777" /><circle cx="3" cy="3" r="2.800" fill="#777" /></Svg>
      <div className="ml-auto flex h-full w-[38px] items-center justify-center bg-[#c8c8c8]"><Svg className="size-[13px]" box="0 0 13 13"><path d="M.5.500h12v12H.5zM4.500 0v13M8.500 0v13M0 4.500h13M0 8.500h13" stroke="#666" /></Svg></div>
      <div className="flex w-[38px] justify-center"><Svg className="size-[13px]" box="0 0 13 13"><path d="M.5.500h12v12H.5zM3.500 2.500h6v8h-6zM5 5h3M5 7h3M5 9h3" stroke="#666" /></Svg></div>
      <div className="flex w-[38px] justify-center"><Svg className="size-[13px]" box="0 0 13 13"><path d="M.5.500h12v12H.5zM4.500 0v7.500M8.500 0v7.500M0 7.500h9" stroke="#666" /></Svg></div>
      <div className="ml-[5px] h-[2px] w-[6px] bg-[#555]" />
      <div className="ml-[4px] flex items-center">
        <div className="h-px w-[33px] bg-[#aaa]" /><div className="h-[11px] w-[4px] bg-[#555]" /><div className="h-px w-[13px] bg-[#aaa]" /><div className="h-[5px] w-px bg-[#999]" /><div className="h-px w-[49px] bg-[#aaa]" />
      </div>
      <Svg className="ml-[4px] size-[8px]" box="0 0 8 8"><path d="M4 0v8M0 4h8" stroke="#555" strokeWidth="1.800" /></Svg>
      <Fit className="mr-[8px] ml-[16px] w-[21px]">70%</Fit>
    </div>
  );
}

/* ---------- Internet Explorer ---------- */
function Browser() {
  return (
    <main className="relative flex h-[1080px] w-[1920px] shrink-0 flex-col bg-white text-[12px] text-black">
      <div className="flex h-7 items-center justify-end pr-[20px]">
        <Svg className="size-[10px]" box="0 0 10 10"><path d="M0 5.500h10" stroke="#888" /></Svg>
        <Svg className="ml-[35px] size-[10px]" box="0 0 10 10"><path d="M.5 2.500h7v7h-7zM2.500 2.500v-2h7v7h-2" stroke="#888" /></Svg>
        <Svg className="ml-[36px] size-[10px]" box="0 0 10 10"><path d="M0 0l10 10M10 0 0 10" stroke="#888" /></Svg>
      </div>
      <div className="-mt-px flex h-[27px] items-start">
        <div className="-mt-[8px] flex h-[35px] items-start overflow-hidden">
          <Svg className="ml-px h-[39px] w-[39px]" box="0 0 39 39"><circle cx="19.500" cy="20" r="18.500" stroke="#b0b0b0" /><path d="M30 17.500H15.500L22 11l-3-1.500L8 20l11 10.500 3-1.500-6.500-6.500H30z" stroke="#b0b0b0" /></Svg>
        </div>
        <Svg className="-mt-px ml-[2px] h-[27px] w-[27px]" box="0 0 27 27"><circle cx="13.500" cy="13.500" r="12.800" stroke="#b0b0b0" /><path d="M6.500 12H16l-4-4 2.500-1.200 7 6.700-7 6.700L12 19l4-4H6.500z" stroke="#b0b0b0" /></Svg>
        <div className="ml-[2px] flex h-[24px] w-[1279px] items-center border border-[#ababab] bg-white pr-[5px] pl-[4px]">
          <Svg className="h-[15px] w-[16px]" box="0 0 16 15"><path d="M0 1h3.500v13H0z" fill="#8ec8e8" /><path d="M4.500.500h7v12h-7zM7.500 3.500h8v11h-8z" fill="#f3f6f9" stroke="#d5dde4" /><path d="M8 8h7M6 5h5" stroke="#c3d0db" /></Svg>
          <Fit className="ml-[5px] w-[554px] text-[#777]"><span className="text-black">https</span>://ipowerph.eps.ad.<span className="text-black">pwcinternal.com</span>/#/modules/legacy/openI?url=gui%2Fiportfolio%2Fdefault.aspx</Fit>
          <Svg className="ml-auto h-[4px] w-[7px]" box="0 0 7 4"><path d="M0 0h7L3.500 4z" fill="#777" /></Svg>
          <Svg className="ml-[8px] h-[12px] w-[10px]" box="0 0 10 12"><path d="M2 6V3.500a3 3 0 0 1 6 0V6" stroke="#777" strokeWidth="1.500" /><path d="M0 5.500h10V12H0z" fill="#777" /></Svg>
          <Svg className="ml-[6px] h-[10px] w-[10px]" box="0 0 10 10"><path d="M1 .5l8 9M9 .5l-8 9" stroke="#777" strokeWidth="2" /></Svg>
        </div>
        <div className="ml-[6px] flex h-[24px] w-[478px] items-center border border-[#ababab] bg-white pr-[9px] pl-[7px]">
          <Fit className="w-[44px]">Search...</Fit>
          <Svg className="ml-auto h-[13px] w-[13px]" box="0 0 13 13"><circle cx="8" cy="5" r="4" stroke="#777" strokeWidth="1.800" /><path d="M5 8 .8 12.500" stroke="#777" strokeWidth="2.200" /></Svg>
          <Svg className="ml-[6px] h-[4px] w-[7px]" box="0 0 7 4"><path d="M0 0h7L3.500 4z" fill="#777" /></Svg>
        </div>
        <Svg className="mt-[4px] ml-[13px] h-[15px] w-[16px]" box="0 0 16 15"><path d="M.5 7.500 8 .5l7.500 7M2.500 6.500v8h4v-5h3v5h4v-8M2.500 5V2h2v1.500" stroke="#999" /></Svg>
        <Svg className="mt-[3px] ml-[8px] h-[16px] w-[17px]" box="0 0 17 16"><path d="M8.500 1l2.200 5h5.300l-4.200 3.500 1.500 5.500-4.800-3.200L3.700 15l1.500-5.500L1 6h5.300z" stroke="#999" /></Svg>
        <Svg className="mt-[3px] ml-[8px] h-[16px] w-[16px]" box="0 0 16 16"><circle cx="8" cy="8" r="2.300" stroke="#999" /><circle cx="8" cy="8" r="5.200" stroke="#999" /><circle cx="8" cy="8" r="6.800" stroke="#999" strokeWidth="1.800" strokeDasharray="2.700 2.640" /></Svg>
      </div>
      <div className="flex h-[23px]">
        <div className="flex w-[200px] items-center border border-b-0 border-[#ababab] bg-white pr-[6px] pl-[7px]">
          <Svg className="size-[12px]" box="0 0 12 12"><circle cx="6" cy="6" r="4.800" stroke="#b5b5b5" strokeWidth="2.300" /><path d="M6 1.200A4.800 4.800 0 0 0 1.200 6 4.800 4.800 0 0 0 5 10.700" stroke="#777" strokeWidth="2.300" /></Svg>
          <Fit className="ml-[6px] w-[36px]">iPower</Fit>
          <Svg className="ml-auto size-[9px]" box="0 0 9 9"><path d="M1 1l7 7M8 1 1 8" stroke="#a5a5a5" strokeWidth="2" /></Svg>
        </div>
        <div className="-ml-px flex w-[23px] items-center justify-center border border-b-0 border-[#ababab] bg-[#e0e0e0]">
          <Svg className="h-[16px] w-[15px]" box="0 0 15 16"><path d="M1.500 2.500h10v13h-10z" fill="#fafafa" stroke="#8a8a8a" /><circle cx="11.500" cy="3.500" r="2" fill="#f5a623" /><path d="M11.500 0v7M8 3.500h7M9 1l5 5M14 1 9 6" stroke="#f5a623" strokeWidth=".8" /></Svg>
        </div>
        <div className="mr-[8px] flex-1 bg-linear-to-b from-white to-[#ebebeb]" />
      </div>
      <div className="absolute top-[170px] left-[367px] flex h-[760px] w-[1206px] flex-col border border-[#757575] bg-white shadow-[0_2px_22px_rgba(0,0,0,0.45)]">
        <div className="flex h-[30px] shrink-0 items-center bg-[#8c8c8c] pl-[8px]">
          <IeIcon className="size-[17px]" />
          <Fit className="ml-[5px] w-[576px]">https://ipowerph.eps.ad.pwcinternal.com/gui/iShared/scripts/new/app/popUp/blank.html - Internet Explorer</Fit>
          <div className="ml-auto flex pr-[18px]">
            <Svg className="size-[10px]" box="0 0 10 10"><path d="M0 5.500h10" stroke="#000" /></Svg>
            <Svg className="ml-[35px] size-[10px]" box="0 0 10 10"><path d="M.5.500h9v9h-9z" stroke="#000" /></Svg>
            <Svg className="ml-[36px] size-[10px]" box="0 0 10 10"><path d="M0 0l10 10M10 0 0 10" stroke="#000" /></Svg>
          </div>
        </div>
        <div className="mt-auto flex h-[24px] items-center border-t border-[#d9d9d9] bg-[#f0f0f0]">
          <Svg className="ml-auto size-[12px]" box="0 0 12 12"><circle cx="5" cy="5" r="3.700" fill="#dcecf8" stroke="#6b87a3" strokeWidth="1.300" /><path d="M8 8l3.500 3.500" stroke="#6b6b6b" strokeWidth="2" /><path d="M3 5h4M5 3v4" stroke="#3c78b4" /></Svg>
          <Fit className="ml-[3px] w-[29px]">100%</Fit>
          <Svg className="ml-[15px] h-[4px] w-[7px]" box="0 0 7 4"><path d="M0 0h7L3.500 4z" fill="#222" /></Svg>
          <Svg className="mt-auto ml-[14px] h-[9px] w-[9px]" box="0 0 9 9"><path d="M6 0h2v2H6zM3 3h2v2H3zM6 3h2v2H6zM0 6h2v2H0zM3 6h2v2H3zM6 6h2v2H6z" fill="#bdbdbd" /></Svg>
        </div>
      </div>
      <BottomTaskbar />
    </main>
  );
}

export default function App() {
  return (
    <div className="flex h-[1080px] w-[3840px] overflow-hidden bg-white font-['Open_Sans','Noto_Sans',sans-serif]">
      <SideTaskbar />
      <div className="flex h-[1080px] w-[1858px] shrink-0 flex-col bg-[#e6e6e6]">
        <ExcelTitle />
        <Ribbon />
        <FormulaBar />
        <Sheet />
        <SheetTabs />
        <StatusBar />
      </div>
      <Browser />
    </div>
  );
}
